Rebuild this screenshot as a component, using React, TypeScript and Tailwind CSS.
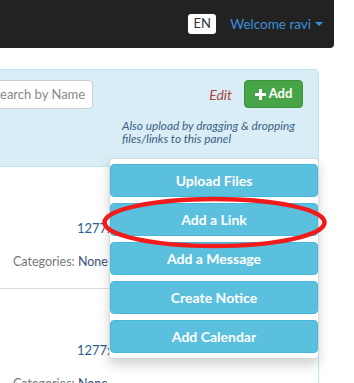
import React from "react";

const menuItems = ["Upload Files", "Add a Link", "Add a Message", "Create Notice", "Add Calendar"];

const Row = () => (
  <div className="h-[122px] border-b border-[#dddddd] pl-[42px] pt-[51px] text-[12.5px] leading-[20px]">
    <div className="whitespace-nowrap pl-[64px] text-[13px] text-[#2d5f8c]">1277x958</div>
    <div className="mt-[14px] whitespace-nowrap text-[#777777]">
      Categories: <span className="text-[#3d4f7c]">None</span>
    </div>
  </div>
);

const App = () => {
  return (
    <div className="relative h-[383px] w-[354px] overflow-hidden bg-white font-['Lato',sans-serif]">
      <header className="flex h-[48px] w-[334px] items-center justify-end rounded-br-[4px] bg-[#222222] pr-[11px]">
        <div className="flex h-[20px] w-[28px] items-center justify-center rounded-[3px] bg-white text-[13px] text-[#333333]">
          EN
        </div>
        <div className="ml-[14px] flex items-center text-[13.5px] text-[#3c8fdc]">
          Welcome ravi
          <span className="ml-[4px] inline-block h-0 w-0 border-x-[4px] border-t-[4px] border-x-transparent border-t-[#3c8fdc]" />
        </div>
      </header>

      <div className="-ml-[30px] mt-[21px] w-[349px] rounded-[4px] border border-[#bce8f1]">
        <div className="flex h-[97px] justify-between border-b border-[#bce8f1] bg-[#d9edf7] pl-[9px] pr-[15px] pt-[10px]">
          <div className="flex h-[29px] w-[113px] items-center overflow-hidden whitespace-nowrap rounded-[4px] border border-[#cccccc] bg-white pl-[12px] text-[13px] text-[#888888]">
            Search by Name
          </div>
          <div className="flex flex-col items-end">
            <div className="flex items-center">
              <span className="text-[14px] italic text-[#a94442]">Edit</span>
              <button className="ml-[12px] flex h-[28px] w-[59px] items-center justify-center gap-[3px] rounded-[4px] border border-[#3e8f3e] bg-[#47a447] text-[13px] font-bold text-white">
                <svg width="11" height="11" viewBox="0 0 11 11">
                  <rect x="4" y="0" width="3" height="11" fill="white" />
                  <rect x="0" y="4" width="11" height="3" fill="white" />
                </svg>
                Add
              </button>
            </div>
            <p className="mt-[11px] w-[181px] text-[11.8px] italic leading-[13px] text-[#3b6283]">
              Also upload by dragging &amp; dropping
              <br />
              files/links to this panel
            </p>
          </div>
        </div>
        <Row />
        <Row />
      </div>

      <div className="absolute left-[109px] top-[158px] flex w-[210px] flex-col gap-[6px] rounded-[4px] border border-[rgba(0,0,0,0.15)] bg-white py-[5px] shadow-[0_6px_12px_rgba(0,0,0,0.175)]">
        {menuItems.map((label) => (
          <button
            key={label}
            className="flex h-[33px] items-center justify-center rounded-[4px] border border-[#46b8da] bg-[#5bc0de] text-[14px] font-bold text-white"
          >
            {label}
          </button>
        ))}
      </div>

      <svg className="absolute left-[100px] top-[195px]" width="230" height="56" viewBox="0 0 230 56">
        <ellipse cx="114.5" cy="27.5" rx="110" ry="23.5" fill="none" stroke="#f21b1b" strokeWidth="4.5" />
      </svg>
    </div>
  );
};

export default App;
